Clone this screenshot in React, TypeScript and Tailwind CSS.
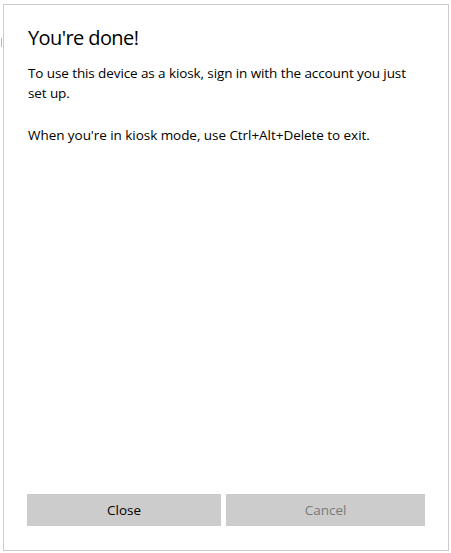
export default function App() {
  const font = "font-['Open_Sans',_'Noto_Sans',_sans-serif]"
  return (
    <div className={`w-[451px] h-[553px] bg-white pl-[3px] pt-[4px] relative ${font}`}>
      <div className="absolute left-[1px] top-[38px] h-[9px] w-px bg-[#b5b5b5]" />
      <div className="w-[446px] h-[547px] border border-[#cccccc] bg-white flex flex-col px-[23px] pt-[18px] pb-[24px]">
        <h1 className="text-[20px] leading-[30px] tracking-[-0.6px] text-black pl-px">You're done!</h1>
        <p className="mt-[10px] text-[13.5px] leading-[20px] tracking-[-0.1px] text-black pl-px">
          To use this device as a kiosk, sign in with the account you just set up.
        </p>
        <p className="mt-[22px] text-[13.5px] leading-[20px] tracking-[-0.05px] text-black pl-px">
          When you're in kiosk mode, use Ctrl+Alt+Delete to exit.
        </p>
        <div className="mt-auto flex gap-[5px]">
          <button className="w-[194px] h-[32px] bg-[#cccccc] text-[13.5px] text-black">Close</button>
          <button className="w-[199px] h-[32px] bg-[#cccccc] text-[13.5px] text-[#7a7a7a]">Cancel</button>
        </div>
      </div>
    </div>
  )
}
